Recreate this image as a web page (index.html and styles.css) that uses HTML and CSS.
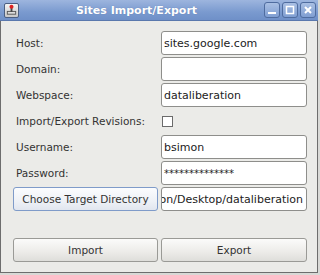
FILE: index.html
```html
<!DOCTYPE html>
<html lang="en">
<head>
<meta charset="UTF-8">
<title>Sites Import/Export</title>
<link rel="stylesheet" href="styles.css">
</head>
<body>

<div class="window">
  <div class="titlebar">
    <span class="app-icon">
      <svg width="14" height="14" viewBox="0 0 14 14">
        <rect x="2" y="8" width="10" height="4" fill="#555" />
        <rect x="3" y="9" width="8" height="2" fill="#ddd" />
        <rect x="6" y="4" width="2" height="5" fill="#444" />
        <circle cx="7" cy="3.5" r="2.2" fill="#d22" />
      </svg>
    </span>
    <span class="title">Sites Import/Export</span>
    <span class="wbtn"><svg width="10" height="10" viewBox="0 0 10 10"><rect x="1" y="7" width="8" height="2" fill="#fff" /></svg></span>
    <span class="wbtn"><svg width="10" height="10" viewBox="0 0 10 10"><rect x="1.5" y="1.5" width="7" height="7" fill="none" stroke="#fff" stroke-width="1.5" /></svg></span>
    <span class="wbtn"><svg width="10" height="10" viewBox="0 0 10 10"><path d="M2 2 L8 8 M8 2 L2 8" stroke="#fff" stroke-width="2" /></svg></span>
  </div>

  <div class="content">
    <div class="form">
      <label class="lbl">Host:</label>
      <div class="field">sites.google.com</div>

      <label class="lbl">Domain:</label>
      <div class="field"></div>

      <label class="lbl">Webspace:</label>
      <div class="field">dataliberation</div>

      <label class="lbl">Import/Export Revisions:</label>
      <div class="check-cell"><span class="checkbox"></span></div>

      <label class="lbl">Username:</label>
      <div class="field">bsimon</div>

      <label class="lbl">Password:</label>
      <div class="field pass">**************</div>

      <button class="btn focused" type="button">Choose Target Directory</button>
      <div class="field path"><span>/home/bsimon/Desktop/dataliberation</span></div>
    </div>

    <div class="actions">
      <button class="btn" type="button">Import</button>
      <button class="btn" type="button">Export</button>
    </div>
  </div>
</div>

</body>
</html>
```

FILE: styles.css
```css
body {
  margin: 0;
  background: #d9d9d6;
  font-family: "DejaVu Sans", sans-serif;
  font-size: 10.5px;
  color: #333;
}
.window {
  width: 316px;
  height: 272px;
  border: 1px solid #6d6d6d;
  border-top: none;
  background: #ebebe8;
  box-sizing: content-box;
}
.titlebar {
  height: 21px;
  margin: 0 -1px;
  display: flex;
  align-items: center;
  padding: 0 2px 0 4px;
  background: linear-gradient(#9db5de, #7a9acf 60%, #6f90c8);
  border-bottom: 1px solid #5a78ad;
  box-sizing: border-box;
}
.app-icon {
  width: 15px;
  height: 15px;
  background: linear-gradient(#f4f4f4, #c8c8c8);
  border: 1px solid #4c5f82;
  border-radius: 2px;
  display: flex;
  align-items: center;
  justify-content: center;
  box-sizing: border-box;
}
.title {
  flex: 1;
  text-align: center;
  color: #fff;
  font-weight: bold;
  font-size: 11px;
  padding-right: 8px;
  text-shadow: 0 0 1px #5a78ad;
}
.wbtn {
  width: 16px;
  height: 16px;
  margin-left: 2px;
  border: 1px solid #4f6c9f;
  border-radius: 3px;
  background: linear-gradient(#a9bfe3, #7f9ed2);
  display: flex;
  align-items: center;
  justify-content: center;
  box-sizing: border-box;
}
.content {
  padding: 10px 10px 0 12px;
}
.form {
  display: grid;
  grid-template-columns: 145px 146px;
  grid-auto-rows: 24px;
  column-gap: 3px;
  row-gap: 2px;
  align-items: center;
}
.lbl {
  padding-left: 3px;
}
.field {
  height: 24px;
  box-sizing: border-box;
  background: #fff;
  border: 1px solid #8e8e8b;
  border-radius: 3px;
  padding: 0 2px;
  display: flex;
  align-items: center;
  white-space: nowrap;
  overflow: hidden;
  font-size: 11px;
  color: #222;
}
.pass {
  font-size: 10px;
}
.path {
  justify-content: flex-end;
  padding-right: 3px;
}
.check-cell {
  display: flex;
  align-items: center;
  padding-left: 1px;
}
.checkbox {
  width: 11px;
  height: 11px;
  box-sizing: border-box;
  border: 1px solid #6b6b6b;
  background: #fff;
}
.btn {
  height: 24px;
  font-family: "DejaVu Sans", sans-serif;
  font-size: 10.5px;
  color: #333;
  background: linear-gradient(#fbfbfa, #ecebe8 60%, #dededa);
  border: 1px solid #9a9a96;
  border-radius: 3px;
  padding: 0;
  white-space: nowrap;
  overflow: hidden;
}
.btn.focused {
  border-color: #7f9bc9;
  background: linear-gradient(#fbfcfe, #eef1f6 60%, #e1e6ef);
}
.actions {
  display: grid;
  grid-template-columns: 145px 146px;
  column-gap: 3px;
  margin-top: 27px;
}
```
